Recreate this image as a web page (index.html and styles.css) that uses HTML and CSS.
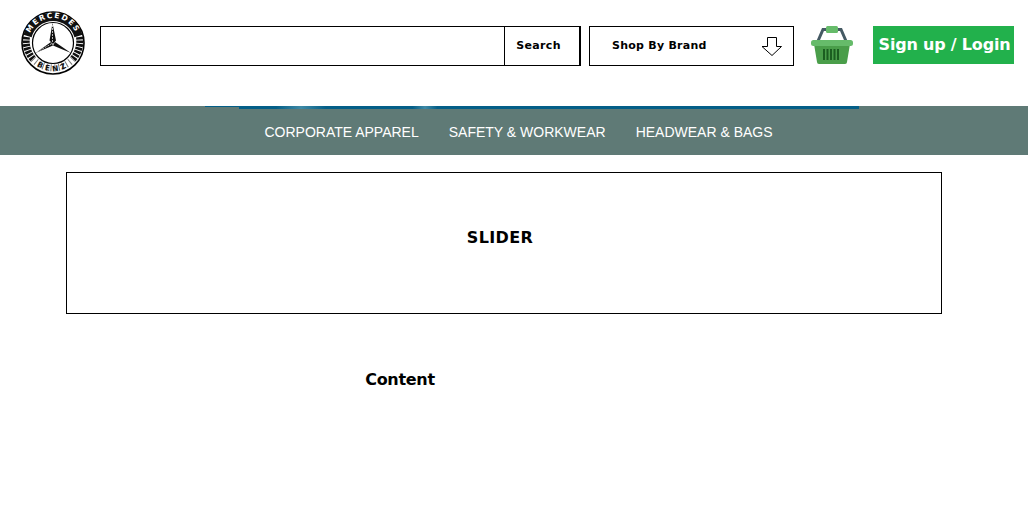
FILE: index.html
```html
<!DOCTYPE html>
<html>
  <head>
    <title>Shop</title>
    <meta charset="UTF-8">
    <link rel="stylesheet" href="styles.css">
  </head>
  <body>
    <div class="header">
      <svg class="logo" width="66" height="66" viewBox="0 0 66 66">
        <defs>
          <path id="arcTop" d="M8 33a25 25 0 0 1 50 0"/>
          <path id="arcBottom" d="M5 33a28 28 0 0 0 56 0"/>
        </defs>
        <circle cx="33" cy="33" r="31" fill="#fff" stroke="#000" stroke-width="1.6"/>
        <path d="M7.500 26a26.500 26.500 0 0 1 51 0" fill="none" stroke="#111" stroke-width="8.500"/>
        <path d="M6.500 27a27 27 0 0 0 6.500 22M59.500 27a27 27 0 0 1-6.500 22" fill="none" stroke="#111" stroke-width="7" stroke-dasharray="2.500 1"/>
        <path d="M13 49a27 27 0 0 0 40 0" fill="none" stroke="#777" stroke-width="7" stroke-dasharray="1 3"/>
        <circle cx="33" cy="33" r="20.500" fill="#fff" stroke="#000" stroke-width="1.200"/>
        <path d="M32.500 13 36 30.500 33 34 29.500 30.500zM31 32 15.500 43 33 35.500zM35 32 51 43 33 35.500z" fill="#111"/>
        <path d="M32.500 15V32M17 42 32 33.500" stroke="#fff" stroke-width=".7" stroke-dasharray="2 1"/>
        <text class="logo-text logo-top"><textPath href="#arcTop" startOffset="50%" text-anchor="middle">MERCEDES</textPath></text>
        <text class="logo-text logo-bottom"><textPath href="#arcBottom" startOffset="50%" text-anchor="middle">BENZ</textPath></text>
      </svg>
      <div class="search">
        <input class="search-input" type="text">
        <div class="search-btn">Search</div>
      </div>
      <div class="brand">
        <span>Shop By Brand</span>
        <svg width="22" height="20" viewBox="0 0 22 20">
          <path d="M6.500.5h9v9h5l-9.500 9-10-9h5.500z" fill="#fff" stroke="#000"/>
        </svg>
      </div>
      <svg class="basket" width="42" height="38" viewBox="0 0 42 38">
        <path d="M7 15 12 3.500H30L35 15" fill="none" stroke="#455a64" stroke-width="3"/>
        <rect x="15" y="0" width="12" height="7" rx="1.500" fill="#66bb6a"/>
        <path d="M3 18H39L36 36a2 2 0 0 1-2 2H8a2 2 0 0 1-2-2z" fill="#4a9e4a"/>
        <rect x="0" y="14" width="42" height="6" rx="2.500" fill="#66bb6a"/>
        <path d="M13 23V34M16.500 23V34M20 23V34M23.500 23V34M27 23V34" stroke="#1b5e20" stroke-width="2"/>
      </svg>
      <a class="signup">Sign up / Login</a>
    </div>
    <div class="nav">
      <div class="nav-stripe"></div>
      <a>CORPORATE APPAREL</a>
      <a>SAFETY &amp; WORKWEAR</a>
      <a>HEADWEAR &amp; BAGS</a>
    </div>
    <div class="slider"><h3 class="slider-title">SLIDER</h3></div>
    <div class="content"><h3 class="content-title">Content</h3></div>
  </body>
</html>
```

FILE: styles.css
```css
body {
  margin: 0;
  background-color: #fff;
  font-family: "DejaVu Sans", Verdana, sans-serif;
  color: #000;
}

.header {
  height: 106px;
  display: flex;
  align-items: flex-start;
  box-sizing: border-box;
  padding: 10px 0 0 20px;
}

.logo {
  flex: none;
}

.logo-text {
  font-size: 7.500px;
  font-weight: bold;
  letter-spacing: 1.500px;
}

.logo-top {
  fill: #fff;
}

.logo-bottom {
  fill: #111;
  letter-spacing: 3px;
}

.search {
  display: flex;
  width: 481px;
  height: 40px;
  margin: 16px 0 0 14px;
  box-sizing: border-box;
  border: 1px solid #000;
  border-right-width: 2px;
}

.search-input {
  flex: 1;
  min-width: 0;
  border: none;
  padding: 0;
  outline: none;
}

.search-btn {
  width: 75px;
  border-left: 1px solid #000;
  padding-right: 7px;
  box-sizing: border-box;
  font-size: 11px;
  font-weight: bold;
  letter-spacing: .35px;
  line-height: 38px;
  text-align: center;
}

.brand {
  display: flex;
  align-items: center;
  justify-content: space-between;
  width: 205px;
  height: 40px;
  margin: 16px 0 0 8px;
  box-sizing: border-box;
  border: 1px solid #000;
  padding: 0 10px 2px 22px;
  font-size: 11px;
  font-weight: bold;
  letter-spacing: .25px;
}

.brand svg {
  margin-top: 4px;
}

.basket {
  flex: none;
  margin: 16px 0 0 17px;
}

.signup {
  width: 141px;
  height: 38px;
  margin: 16px 0 0 20px;
  padding-left: 2px;
  box-sizing: border-box;
  background-color: #22b14c;
  color: #fff;
  font-size: 16px;
  font-weight: bold;
  letter-spacing: -.2px;
  line-height: 37px;
  text-align: center;
  white-space: nowrap;
}

.nav {
  position: relative;
  height: 49px;
  display: flex;
  justify-content: center;
  align-items: center;
  gap: 30px;
  padding: 2px 0 0 9px;
  box-sizing: border-box;
  background-color: #5f7a76;
  font-family: "Liberation Sans", Arial, sans-serif;
  font-size: 14px;
  color: #fff;
}

.nav-stripe {
  position: absolute;
  top: 0;
  left: 239px;
  width: 620px;
  height: 3px;
  background: linear-gradient(90deg, #045f88 0%, #045f88 6%, #3f8aa6 10%, #045f88 14%, #045f88 28%, #3f8aa6 30%, #045f88 32%, #045f88 100%);
}

.nav-stripe::before {
  content: "";
  position: absolute;
  top: 0;
  left: -34px;
  width: 34px;
  height: 1px;
  background-color: #045f88;
}

.slider {
  width: 876px;
  height: 142px;
  margin: 17px 0 0 66px;
  box-sizing: border-box;
  border: 1px solid #000;
  padding-top: 55px;
  padding-right: 8px;
  text-align: center;
}

h3 {
  margin: 0;
  font-size: 16px;
  font-weight: bold;
}

.slider-title {
  letter-spacing: .35px;
}

.content-title {
  letter-spacing: -.3px;
}

.content {
  width: 800px;
  margin-top: 56px;
  text-align: center;
}
```
